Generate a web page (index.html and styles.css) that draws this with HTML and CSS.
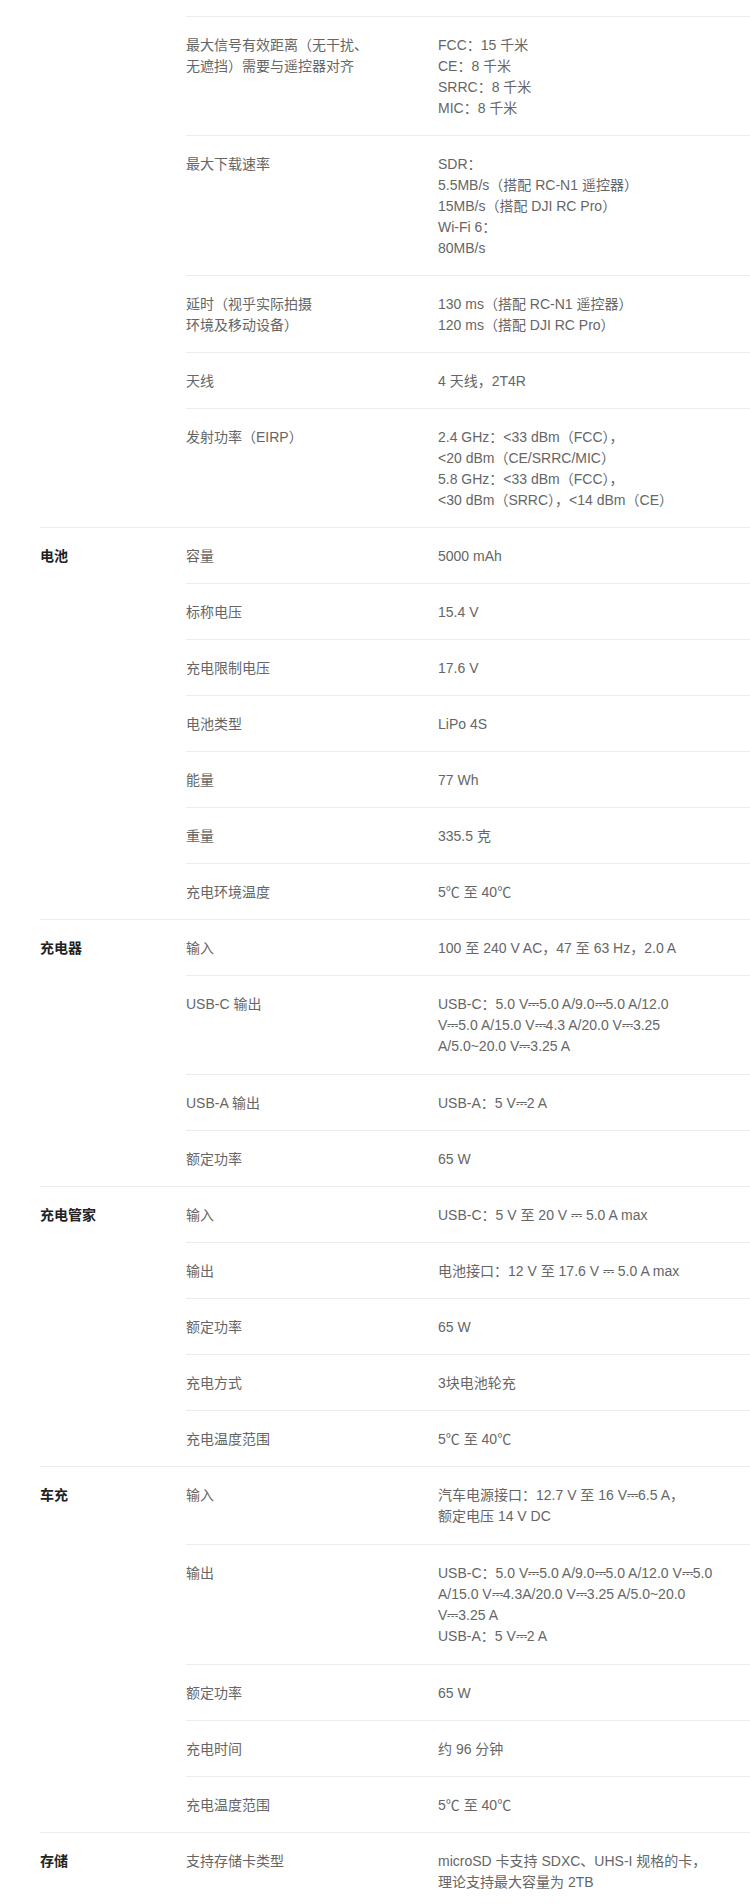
FILE: index.html
```html
<!DOCTYPE html>
<html lang="zh-CN">
<head>
<meta charset="utf-8">
<title>规格参数</title>
<link rel="stylesheet" href="styles.css">
</head>
<body>
<div class="specs">
  <section class="group group-first">
    <div class="cat"></div>
    <div class="rows">
      <div class="row row-top">
        <div class="key">最大信号有效距离（无干扰、<br>无遮挡）需要与遥控器对齐</div>
        <div class="val">FCC：15 千米<br>CE：8 千米<br>SRRC：8 千米<br>MIC：8 千米</div>
      </div>
      <div class="row">
        <div class="key">最大下载速率</div>
        <div class="val">SDR：<br>5.5MB/s（搭配 RC-N1 遥控器）<br>15MB/s（搭配 DJI RC Pro）<br>Wi-Fi 6：<br>80MB/s</div>
      </div>
      <div class="row">
        <div class="key">延时（视乎实际拍摄<br>环境及移动设备）</div>
        <div class="val">130 ms（搭配 RC-N1 遥控器）<br>120 ms（搭配 DJI RC Pro）</div>
      </div>
      <div class="row">
        <div class="key">天线</div>
        <div class="val">4 天线，2T4R</div>
      </div>
      <div class="row">
        <div class="key">发射功率（EIRP）</div>
        <div class="val">2.4 GHz：&lt;33 dBm（FCC），<br>&lt;20 dBm（CE/SRRC/MIC）<br>5.8 GHz：&lt;33 dBm（FCC），<br>&lt;30 dBm（SRRC），&lt;14 dBm（CE）</div>
      </div>
    </div>
  </section>

  <section class="group">
    <div class="cat">电池</div>
    <div class="rows">
      <div class="row"><div class="key">容量</div><div class="val">5000 mAh</div></div>
      <div class="row"><div class="key">标称电压</div><div class="val">15.4 V</div></div>
      <div class="row"><div class="key">充电限制电压</div><div class="val">17.6 V</div></div>
      <div class="row"><div class="key">电池类型</div><div class="val">LiPo 4S</div></div>
      <div class="row"><div class="key">能量</div><div class="val">77 Wh</div></div>
      <div class="row"><div class="key">重量</div><div class="val">335.5 克</div></div>
      <div class="row"><div class="key">充电环境温度</div><div class="val">5℃ 至 40℃</div></div>
    </div>
  </section>

  <section class="group">
    <div class="cat">充电器</div>
    <div class="rows">
      <div class="row"><div class="key">输入</div><div class="val">100 至 240 V AC，47 至 63 Hz，2.0 A</div></div>
      <div class="row row-tall"><div class="key">USB-C 输出</div><div class="val">USB-C：5.0 V⎓5.0 A/9.0⎓5.0 A/12.0<br>V⎓5.0 A/15.0 V⎓4.3 A/20.0 V⎓3.25<br>A/5.0~20.0 V⎓3.25 A</div></div>
      <div class="row"><div class="key">USB-A 输出</div><div class="val">USB-A：5 V⎓2 A</div></div>
      <div class="row"><div class="key">额定功率</div><div class="val">65 W</div></div>
    </div>
  </section>

  <section class="group">
    <div class="cat">充电管家</div>
    <div class="rows">
      <div class="row"><div class="key">输入</div><div class="val">USB-C：5 V 至 20 V ⎓ 5.0 A max</div></div>
      <div class="row"><div class="key">输出</div><div class="val">电池接口：12 V 至 17.6 V ⎓ 5.0 A max</div></div>
      <div class="row"><div class="key">额定功率</div><div class="val">65 W</div></div>
      <div class="row"><div class="key">充电方式</div><div class="val">3块电池轮充</div></div>
      <div class="row"><div class="key">充电温度范围</div><div class="val">5℃ 至 40℃</div></div>
    </div>
  </section>

  <section class="group">
    <div class="cat">车充</div>
    <div class="rows">
      <div class="row row-tall"><div class="key">输入</div><div class="val">汽车电源接口：12.7 V 至 16 V⎓6.5 A，<br>额定电压 14 V DC</div></div>
      <div class="row row-tall"><div class="key">输出</div><div class="val">USB-C：5.0 V⎓5.0 A/9.0⎓5.0 A/12.0 V⎓5.0<br>A/15.0 V⎓4.3A/20.0 V⎓3.25 A/5.0~20.0<br>V⎓3.25 A<br>USB-A：5 V⎓2 A</div></div>
      <div class="row"><div class="key">额定功率</div><div class="val">65 W</div></div>
      <div class="row"><div class="key">充电时间</div><div class="val">约 96 分钟</div></div>
      <div class="row"><div class="key">充电温度范围</div><div class="val">5℃ 至 40℃</div></div>
    </div>
  </section>

  <section class="group">
    <div class="cat">存储</div>
    <div class="rows">
      <div class="row"><div class="key">支持存储卡类型</div><div class="val">microSD 卡支持 SDXC、UHS-I 规格的卡，<br>理论支持最大容量为 2TB</div></div>
    </div>
  </section>
</div>
</body>
</html>
```

FILE: styles.css
```css
html, body {
  margin: 0;
  padding: 0;
  background: #ffffff;
}

body {
  font-family: "Liberation Sans", "Noto Sans CJK SC", sans-serif;
  font-size: 14px;
  line-height: 21px;
  color: #666666;
}

.specs {
  padding: 16px 0 0 40px;
}

.group {
  display: flex;
}

.group + .group {
  border-top: 1px solid #ececec;
}

.cat {
  width: 146px;
  flex: none;
  padding-top: 18px;
  font-weight: bold;
  color: #222222;
}

.rows {
  flex: 1;
}

.row {
  display: flex;
  padding: 18px 0 16px;
}

.row-tall {
  padding-bottom: 17px;
}

.row + .row,
.row-top {
  border-top: 1px solid #ececec;
}

.key {
  width: 252px;
  flex: none;
}

.val {
  flex: 1;
  white-space: nowrap;
}
```
